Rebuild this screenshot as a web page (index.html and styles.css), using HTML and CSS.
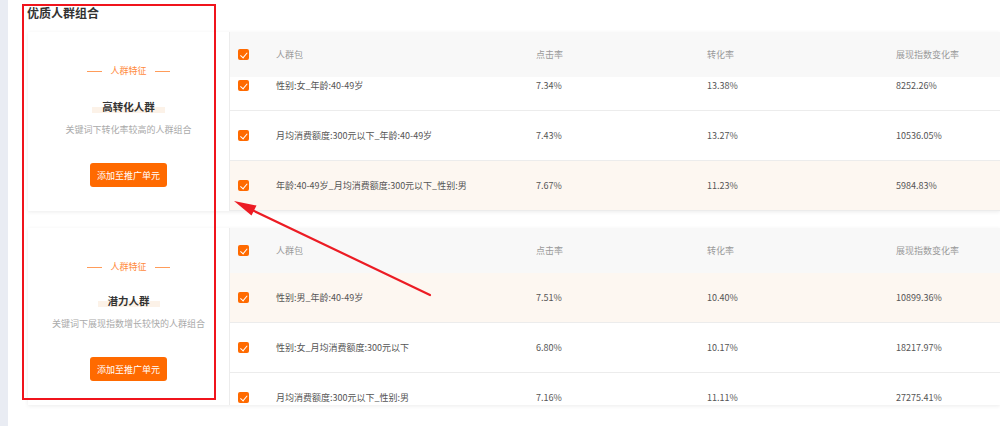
FILE: index.html
```html
<!DOCTYPE html>
<html lang="zh">
<head>
<meta charset="utf-8">
<link rel="stylesheet" href="styles.css">
</head>
<body>
<div class="sidebar"></div>
<main class="main">
  <h2 class="title">优质人群组合</h2>

  <section class="card card-a">
    <div class="feature">
      <div class="tag"><span class="dash"></span>人群特征<span class="dash"></span></div>
      <div class="name"><span>高转化人群</span></div>
      <div class="desc">关键词下转化率较高的人群组合</div>
      <button class="btn">添加至推广单元</button>
    </div>
    <div class="table">
      <div class="row head">
        <span class="cb"></span><span>人群包</span><span>点击率</span><span>转化率</span><span>展现指数变化率</span>
      </div>
      <div class="body">
        <div class="rows shift">
          <div class="row"><span class="cb"></span><span>性别:女_年龄:40-49岁</span><span>7.34%</span><span>13.38%</span><span>8252.26%</span></div>
          <div class="row"><span class="cb"></span><span>月均消费额度:300元以下_年龄:40-49岁</span><span>7.43%</span><span>13.27%</span><span>10536.05%</span></div>
          <div class="row hl"><span class="cb"></span><span>年龄:40-49岁_月均消费额度:300元以下_性别:男</span><span>7.67%</span><span>11.23%</span><span>5984.83%</span></div>
        </div>
      </div>
    </div>
  </section>

  <section class="card card-b">
    <div class="feature">
      <div class="tag"><span class="dash"></span>人群特征<span class="dash"></span></div>
      <div class="name"><span>潜力人群</span></div>
      <div class="desc">关键词下展现指数增长较快的人群组合</div>
      <button class="btn">添加至推广单元</button>
    </div>
    <div class="table">
      <div class="row head">
        <span class="cb"></span><span>人群包</span><span>点击率</span><span>转化率</span><span>展现指数变化率</span>
      </div>
      <div class="body">
        <div class="rows">
          <div class="row hl"><span class="cb"></span><span>性别:男_年龄:40-49岁</span><span>7.51%</span><span>10.40%</span><span>10899.36%</span></div>
          <div class="row"><span class="cb"></span><span>性别:女_月均消费额度:300元以下</span><span>6.80%</span><span>10.17%</span><span>18217.97%</span></div>
          <div class="row"><span class="cb"></span><span>月均消费额度:300元以下_性别:男</span><span>7.16%</span><span>11.11%</span><span>27275.41%</span></div>
        </div>
      </div>
    </div>
  </section>
</main>

<div class="redbox"></div>
<svg class="arrow" width="1000" height="426" viewBox="0 0 1000 426">
  <line x1="430" y1="295" x2="250" y2="209" stroke="#ec1c24" stroke-width="2.2" stroke-linecap="round"/>
  <polygon points="234,201 256.5,205.5 251.5,215.5" fill="#ec1c24"/>
</svg>
</body>
</html>
```

FILE: styles.css
```css
* { box-sizing: border-box; }
html, body { margin: 0; padding: 0; }
body {
  width: 1000px;
  height: 426px;
  overflow: hidden;
  display: flex;
  background: #fff;
  font-family: "Noto Sans CJK SC", "Noto Sans", sans-serif;
  color: #555;
}
.sidebar {
  width: 8px;
  background: #e9ecf3;
  flex: none;
}
.main {
  flex: 1;
  padding-left: 20px;
}
.title {
  margin: 0 0 0 -1px;
  height: 32px;
  padding-top: 5px;
  font-size: 12px;
  line-height: 16px;
  font-weight: 700;
  color: #333;
}
.card {
  display: flex;
  background: #fff;
  box-shadow: 0 1px 4px rgba(0, 0, 0, 0.08);
}
.card-a { height: 179px; }
.card-b { height: 177px; margin-top: 17px; }

.feature {
  width: 202px;
  flex: none;
  border-right: 1px solid #ececec;
  display: flex;
  flex-direction: column;
  align-items: center;
  padding-top: 32px;
}
.tag {
  display: flex;
  align-items: center;
  gap: 8px;
  font-size: 9px;
  line-height: 14px;
  color: #ff8a3d;
}
.dash {
  width: 15px;
  height: 1px;
  background: #ff9c5a;
}
.name {
  margin-top: 21px;
  font-size: 10.5px;
  line-height: 16px;
  font-weight: 700;
  color: #333;
}
.name span {
  padding: 0 10px;
  background: linear-gradient(to bottom, transparent 55%, #fcf2e8 55%, #fcf2e8 95%, transparent 95%);
}
.card-b .name { margin-top: 19px; }
.desc {
  margin-top: 8px;
  font-size: 9px;
  line-height: 14px;
  color: #aaa;
}
.btn {
  margin-top: 26px;
  width: 77px;
  height: 24px;
  border: 0;
  border-radius: 3px;
  background: #ff6a00;
  color: #fff;
  font-family: inherit;
  font-size: 9px;
  padding: 0;
}

.table {
  flex: 1;
  display: flex;
  flex-direction: column;
  min-width: 0;
}
.row {
  display: grid;
  grid-template-columns: 38px 260px 171px 189px 1fr;
  align-items: center;
  padding-left: 8px;
  height: 50px;
  font-size: 9px;
  color: #555;
  border-bottom: 1px solid #ececec;
  white-space: nowrap;
}
.row.head {
  height: 45px;
  background: #f8f8f8;
  color: #9a9a9a;
  border-bottom: 0;
  flex: none;
}
.row.hl { background: #fdf7f1; }
.body {
  flex: 1;
  overflow: hidden;
}
.rows.shift { margin-top: -16px; }
.cb {
  width: 11px;
  height: 11px;
  border-radius: 2px;
  background: #ff6a00;
  position: relative;
}
.cb::after {
  content: "";
  position: absolute;
  left: 3.5px;
  top: 1.5px;
  width: 3px;
  height: 5.5px;
  border: solid #fff;
  border-width: 0 1.5px 1.5px 0;
  transform: rotate(40deg);
}

.redbox {
  position: absolute;
  left: 22px;
  top: 4px;
  width: 194px;
  height: 396px;
  border: 2px solid #f0141c;
  pointer-events: none;
}
.arrow {
  position: absolute;
  left: 0;
  top: 0;
  pointer-events: none;
}
```
